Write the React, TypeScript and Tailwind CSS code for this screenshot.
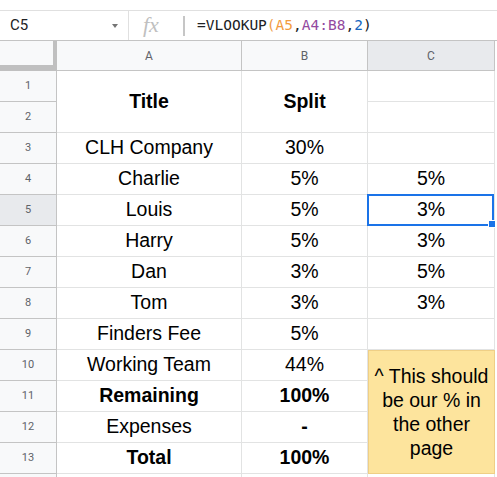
import React from 'react';

type Row = { n: number; a?: string; b?: string; c?: string; bold?: boolean };

const rows: Row[] = [
  { n: 3, a: 'CLH Company', b: '30%', c: '' },
  { n: 4, a: 'Charlie', b: '5%', c: '5%' },
  { n: 5, a: 'Louis', b: '5%', c: '3%' },
  { n: 6, a: 'Harry', b: '5%', c: '3%' },
  { n: 7, a: 'Dan', b: '3%', c: '5%' },
  { n: 8, a: 'Tom', b: '3%', c: '3%' },
  { n: 9, a: 'Finders Fee', b: '5%', c: '' },
  { n: 10, a: 'Working Team', b: '44%' },
  { n: 11, a: 'Remaining', b: '100%', bold: true },
  { n: 12, a: 'Expenses', b: '-' },
  { n: 13, a: 'Total', b: '100%', bold: true },
];

const cell = 'border-r border-b border-[#e2e3e3] flex items-center justify-center text-[19.5px] text-black whitespace-nowrap';
const rowHead = "border-r border-b border-[#c4c4c4] flex items-center justify-center text-[11px] text-[#5f6368] font-['Roboto',sans-serif]";

function RowHeader({ n }: { n: number }) {
  return <div className={`${rowHead} ${n === 5 ? 'bg-[#e8eaed]' : 'bg-[#f8f9fa]'}`}>{n}</div>;
}

export default function App() {
  return (
    <div className="w-[497px] h-[477px] overflow-hidden bg-white font-['Liberation_Sans',Arial,sans-serif]">
      {/* top strip */}
      <div className="h-[11px] border-b border-[#e0e0e0]" />

      {/* formula bar */}
      <div className="h-[30px] flex items-center border-b border-[#c4c4c4]">
        <div className="w-[129px] h-full flex items-center border-r border-[#e0e0e0] pl-[10px] pr-[10px]">
          <span className="text-[15px] text-[#202124] font-['Roboto',sans-serif]">C5</span>
          <span className="ml-auto w-0 h-0 border-l-[3px] border-r-[3px] border-t-[4px] border-l-transparent border-r-transparent border-t-[#757575]" />
        </div>
        <span className="ml-[14px] w-[26px] text-[22px] leading-none italic text-[#c0c0c0] font-['Liberation_Serif',serif] -mt-[2px]">fx</span>
        <div className="ml-[14px] w-[2px] h-[20px] bg-[#c6c6c6]" />
        <div className="ml-[12px] text-[14.5px] font-['DejaVu_Sans_Mono',monospace] text-[#202124] tracking-[0px]">
          =VLOOKUP<span className="text-[#ef9d4a]">(</span>
          <span className="text-[#f39c3d]">A5</span>,<span className="text-[#934aa0]">A4:B8</span>,
          <span className="text-[#1565c0]">2</span>)
        </div>
      </div>

      {/* grid */}
      <div className="w-[495px] grid grid-cols-[57px_185px_126px_127px] grid-rows-[30px_repeat(13,31px)_10px]">
        <div className="bg-[#f8f9fa] border-r-4 border-b-[6px] border-[#c0c0c0]" />
        <div className="bg-[#f8f9fa] border-r border-b border-[#c4c4c4] flex items-center justify-center text-[12px] text-[#5f6368] font-['Roboto',sans-serif]">A</div>
        <div className="bg-[#f8f9fa] border-r border-b border-[#c4c4c4] flex items-center justify-center text-[12px] text-[#5f6368] font-['Roboto',sans-serif]">B</div>
        <div className="bg-[#e8eaed] border-r border-b border-[#c4c4c4] flex items-center justify-center text-[12px] text-[#5f6368] font-['Roboto',sans-serif]">C</div>

        {/* rows 1-2 */}
        <RowHeader n={1} />
        <div className={`${cell} row-span-2 font-bold`}>Title</div>
        <div className={`${cell} row-span-2 font-bold`}>Split</div>
        <div className={cell} />
        <RowHeader n={2} />
        <div className={cell} />

        {rows.map((r) => (
          <React.Fragment key={r.n}>
            <RowHeader n={r.n} />
            <div className={`${cell} ${r.bold ? 'font-bold' : ''}`}>{r.a}</div>
            <div className={`${cell} ${r.bold || r.b === '-' ? 'font-bold' : ''}`}>{r.b}</div>
            {r.n === 10 && (
              <div className="row-span-4 bg-[#fde49d] border border-[#efcf86] flex items-center justify-center text-center text-[19.5px] leading-[24px] px-[3px] text-black">
                ^ This should be our % in the other page
              </div>
            )}
            {r.c !== undefined && (
              <div className={`${cell} ${r.n === 5 ? 'relative' : ''}`}>
                {r.c}
                {r.n === 5 && (
                  <>
                    <div className="absolute -top-px -left-px right-0 -bottom-px border-2 border-[#1a73e8] z-10" />
                    <div className="absolute right-[-2px] bottom-[-3px] w-[8px] h-[8px] bg-[#1a73e8] border border-white z-20" />
                  </>
                )}
              </div>
            )}
          </React.Fragment>
        ))}

        <div className="bg-[#f8f9fa] border-r border-[#c4c4c4]" />
        <div className="border-r border-[#e2e3e3]" />
        <div className="border-r border-[#e2e3e3]" />
        <div className="border-r border-[#e2e3e3]" />
      </div>
    </div>
  );
}
